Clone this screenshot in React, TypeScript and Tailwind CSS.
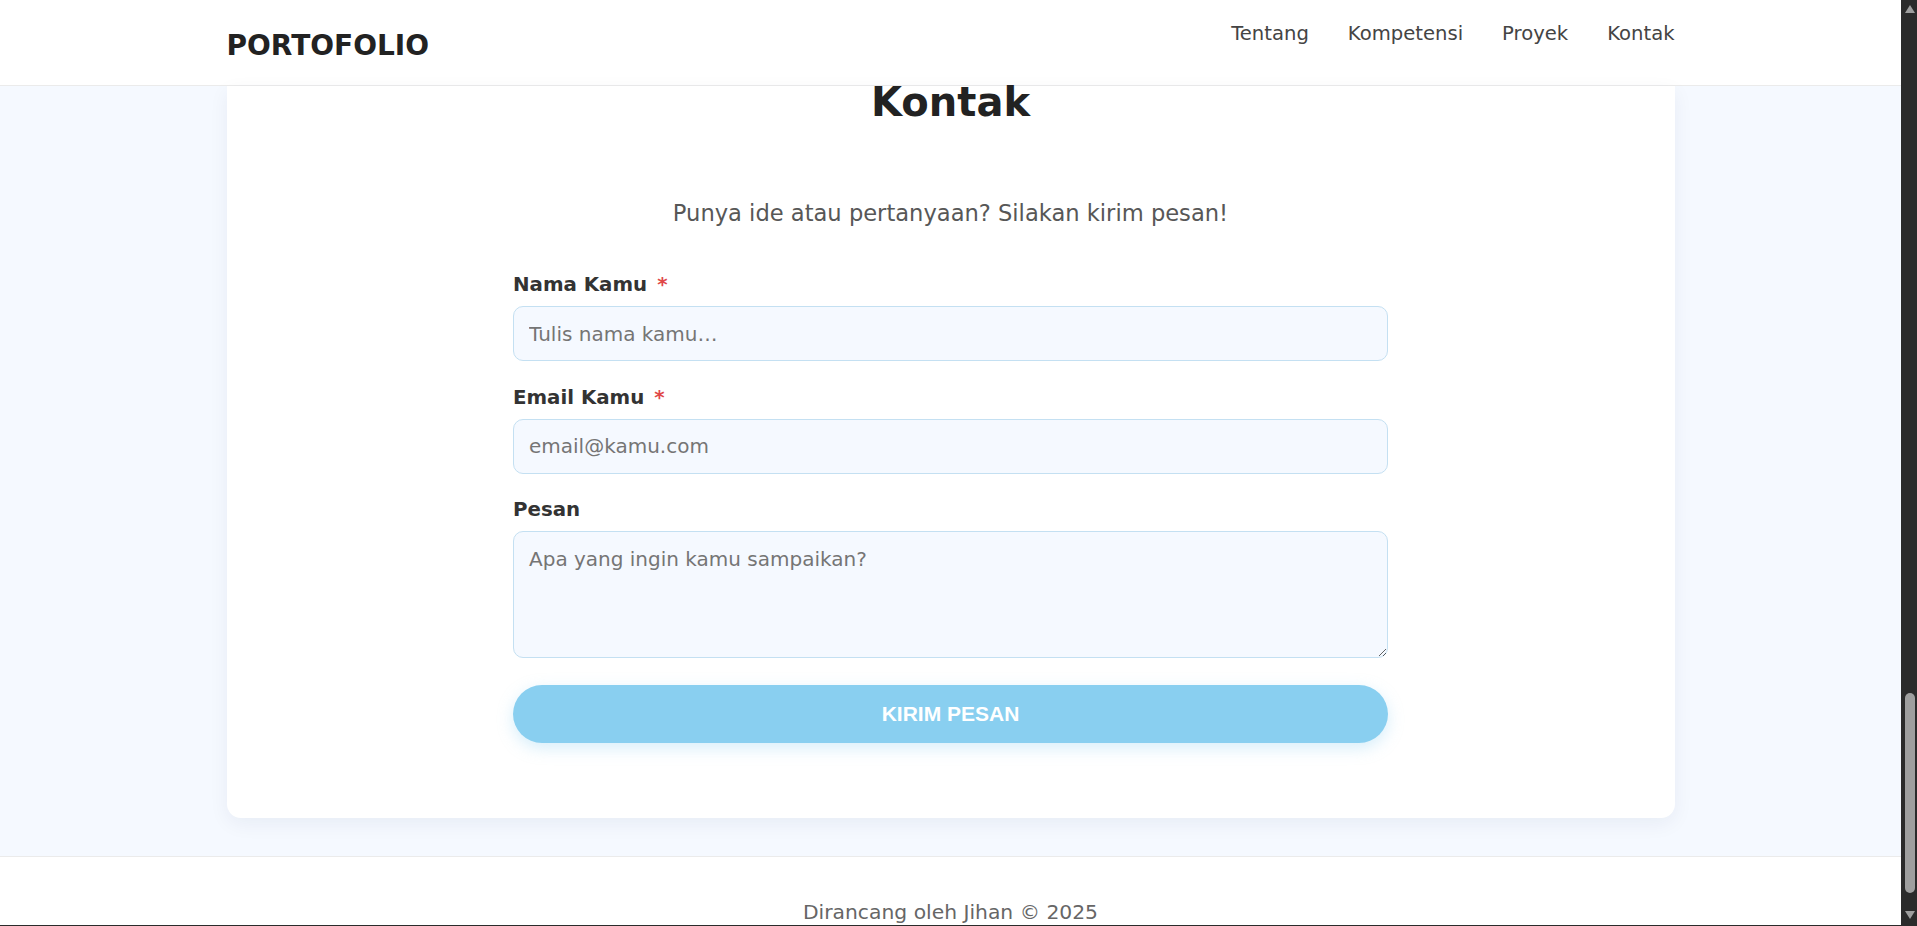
import React from 'react';

const navLinks = ['Tentang', 'Kompetensi', 'Proyek', 'Kontak'];

const Label = ({ text, required }: { text: string; required?: boolean }) => (
  <label className="mb-[10px] block text-[19.8px] leading-[23px] font-bold text-[#333]">
    {text}
    {required && <span className="ml-[10px] text-[#e04848]">*</span>}
  </label>
);

const ScrollBar = () => (
  <div className="flex w-[16px] shrink-0 flex-col bg-[#2b2b2b]">
    <div className="flex h-[17px] items-start justify-center pt-[5px] pl-[1px]">
      <svg width="10" height="8" viewBox="0 0 10 8">
        <path d="M5 0 L10 8 L0 8 Z" fill="#9f9f9f" />
      </svg>
    </div>
    <div className="flex flex-1 flex-col justify-end pb-[15px]">
      <div className="mx-auto h-[200px] w-[10px] translate-x-[1px] rounded-full bg-[#9f9f9f]" />
    </div>
    <div className="flex h-[17px] items-start justify-center pt-[3px] pl-[1px]">
      <svg width="10" height="8" viewBox="0 0 10 8">
        <path d="M0 0 L10 0 L5 8 Z" fill="#9f9f9f" />
      </svg>
    </div>
  </div>
);

const App = () => {
  return (
    <div className="flex h-[926px] flex-col overflow-hidden bg-[#2b2b2b] font-['DejaVu_Sans',sans-serif]">
      <div className="flex h-[925px] shrink-0">
        <div className="flex min-w-0 flex-1 flex-col overflow-hidden bg-[#f5f9ff]">
          <header className="h-[86px] shrink-0 border-b border-[#ebebeb] bg-white">
            <div className="mx-auto flex h-full w-full max-w-[1448px] items-start justify-between">
              <span className="mt-[30px] text-[28px] leading-[32.6px] font-bold text-[#222]">PORTOFOLIO</span>
              <nav className="mt-[22px] flex gap-[39px]">
                {navLinks.map((link) => (
                  <a key={link} href="#" className="text-[19.6px] leading-[23px] text-[#444]">
                    {link}
                  </a>
                ))}
              </nav>
            </div>
          </header>

          <section className="shrink-0 pb-[38px]">
            <div className="mx-auto w-full max-w-[1448px] rounded-b-[14px] bg-white pb-[75px] shadow-[0_6px_20px_rgba(20,40,80,0.06)]">
              <h2 className="text-center text-[40px] leading-[32px] font-bold text-[#222]">Kontak</h2>
              <p className="mt-[82px] text-center text-[22.6px] leading-[26px] text-[#575757]">
                Punya ide atau pertanyaan? Silakan kirim pesan!
              </p>

              <form className="mx-auto mt-[47px] flex w-[875px] flex-col" onSubmit={(e) => e.preventDefault()}>
                <Label text="Nama Kamu" required />
                <input
                  type="text"
                  placeholder="Tulis nama kamu…"
                  className="h-[55px] w-full rounded-[10px] border border-[#c4e0f2] bg-[#f5f9ff] px-[15px] text-[20px] outline-none placeholder:text-[#757575]"
                />

                <div className="mt-[24.6px]">
                  <Label text="Email Kamu" required />
                  <input
                    type="email"
                    placeholder="email@kamu.com"
                    className="h-[55px] w-full rounded-[10px] border border-[#c4e0f2] bg-[#f5f9ff] px-[15px] text-[20px] outline-none placeholder:text-[#757575]"
                  />
                </div>

                <div className="mt-[24.6px]">
                  <Label text="Pesan" />
                  <textarea
                    placeholder="Apa yang ingin kamu sampaikan?"
                    className="block h-[127px] w-full rounded-[10px] border border-[#c4e0f2] bg-[#f5f9ff] px-[15px] py-[16px] text-[20px] leading-[23.3px] outline-none placeholder:text-[#757575]"
                  />
                </div>

                <button
                  type="submit"
                  className="mt-[27px] h-[58px] w-full rounded-full bg-[#89cff0] font-['Liberation_Sans',sans-serif] text-[21px] font-bold text-white shadow-[0_5px_16px_rgba(137,207,240,0.35)]"
                >
                  KIRIM PESAN
                </button>
              </form>
            </div>
          </section>

          <footer className="shrink-0 border-t border-[#ebebeb] bg-white pt-[43.5px] pb-[40px] text-center">
            <p className="text-[20.3px] leading-[23.3px] text-[#666]">Dirancang oleh Jihan © 2025</p>
          </footer>
        </div>
        <ScrollBar />
      </div>
    </div>
  );
};

export default App;
